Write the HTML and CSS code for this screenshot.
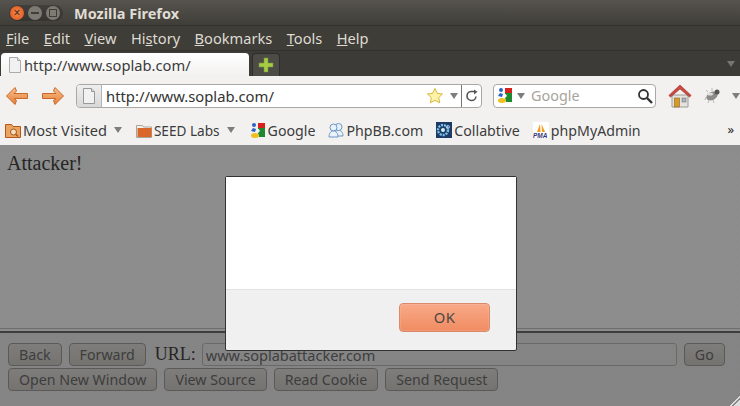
FILE: index.html
```html
<!DOCTYPE html>
<html lang="en">
<head>
  <meta charset="UTF-8">
  <title>Mozilla Firefox</title>
  <link rel="stylesheet" href="styles.css">
</head>
<body>
  <div class="window">
    <div class="titlebar">
      <div class="winbuttons">
        <span class="winbtn close">×</span>
        <span class="winbtn min"><i class="dash"></i></span>
        <span class="winbtn max"><i class="box"></i></span>
      </div>
      <span class="title">Mozilla Firefox</span>
    </div>

    <div class="menubar">
      <span><u>F</u>ile</span>
      <span><u>E</u>dit</span>
      <span><u>V</u>iew</span>
      <span>Hi<u>s</u>tory</span>
      <span><u>B</u>ookmarks</span>
      <span><u>T</u>ools</span>
      <span><u>H</u>elp</span>
    </div>

    <div class="tabbar">
      <div class="tab">
        <svg class="pageicon" width="16" height="16" viewBox="0 0 16 16"><path d="M2.500.5h8l3 3v12h-11z" fill="#f1f1f1" stroke="#aaa"/><path d="M10.500.5v3h3" fill="#ddd" stroke="#aaa"/></svg>
        <span>http://www.soplab.com/</span>
      </div>
      <div class="newtab">
        <svg width="16" height="16" viewBox="0 0 16 16"><path d="M6 1h4v5h5v4h-5v5H6v-5H1V6h5z" fill="#a6cb45" stroke="#76963a" stroke-width=".6"/></svg>
      </div>
      <span class="tabs-arrow"></span>
    </div>

    <div class="navbar">
      <svg class="arrow" width="24" height="20" viewBox="0 0 24 20">
        <defs>
          <linearGradient id="arrowfill" x1="0" y1="0" x2="0" y2="1">
            <stop offset="0" stop-color="#f8c08e"/>
            <stop offset="1" stop-color="#e67f35"/>
          </linearGradient>
        </defs>
        <path d="M10 1.500 1.500 10l8.500 8.500 1.500-4-2.500-2h13.500v-5H9l2.500-2.500z" fill="url(#arrowfill)" stroke="#c9682b" stroke-linejoin="round"/>
      </svg>
      <svg class="arrow next" width="24" height="20" viewBox="0 0 24 20"><path d="M14 1.500l8.500 8.500-8.500 8.500-1.500-4 2.500-2H1.500v-5H15l-2.500-2.500z" fill="url(#arrowfill)" stroke="#c9682b" stroke-linejoin="round"/></svg>

      <div class="urlbar">
        <span class="identity">
          <svg width="16" height="16" viewBox="0 0 16 16"><path d="M2.500.5h8l3 3v12h-11z" fill="#f1f1f1" stroke="#999"/><path d="M10.500.5v3h3" fill="#ddd" stroke="#999"/></svg>
        </span>
        <span class="urltext">http://www.soplab.com/</span>
        <svg class="star" width="18" height="18" viewBox="0 0 18 18"><path d="M9 1.500l2.300 4.800 5.200.7-3.800 3.600 1 5.200L9 13.300l-4.700 2.500 1-5.200L1.500 7l5.200-.7z" fill="#fdf3a8" stroke="#d8b740" stroke-linejoin="round"/></svg>
        <span class="drop"></span>
        <span class="reload">
          <svg width="14" height="14" viewBox="0 0 14 14"><path d="M11 7.500A4.500 4.500 0 1 1 7 2.500h3" fill="none" stroke="#555" stroke-width="1.600"/><path d="M9 .5l3.500 2.300L9 5.500z" fill="#555"/></svg>
        </span>
      </div>

      <div class="searchbar">
        <svg class="gicon" width="16" height="17" viewBox="0 0 16 17"><rect x="8" y="1" width="7" height="6" fill="#d8201c"/><path d="M8 6h7v9H9l-1-4 2-2z" fill="#1d8a30"/><circle cx="4" cy="3" r="2" fill="#2a62c6"/><path d="M1 9l2-3 3 1-1 3z" fill="#2a62c6"/><ellipse cx="5" cy="13.500" rx="4" ry="2.500" fill="#efc01f"/></svg>
        <span class="drop"></span>
        <span class="searchtext">Google</span>
        <svg width="16" height="16" viewBox="0 0 16 16"><circle cx="6.500" cy="6.500" r="4.500" fill="#fff" stroke="#333" stroke-width="1.800"/><path d="M10 10l5 5" stroke="#333" stroke-width="2.400"/></svg>
      </div>

      <svg class="home" width="24" height="24" viewBox="0 0 24 24"><path d="M4 11h16v12H4z" fill="#e5e3df" stroke="#9a9a96"/><path d="M12 1 .800 11.500l1.700 1.500L12 5l9.500 8 1.700-1.500z" fill="#c64a43" stroke="#9f302c" stroke-width=".6"/><rect x="6.500" y="14" width="5" height="9" fill="#d69a2c" stroke="#8c6518" stroke-width=".6"/><rect x="14" y="14" width="4" height="4" fill="#aab4bd" stroke="#777" stroke-width=".6"/></svg>
      <svg class="bug" width="18" height="16" viewBox="0 0 18 16"><ellipse cx="8" cy="8" rx="6" ry="4" fill="#8a8a8a" transform="rotate(-25 8 8)"/><circle cx="13" cy="4" r="2.500" fill="#555"/><path d="M2 9l-1 3M5 12l-1 3M9 12l1 3M4 4 2 2M8 3l0-3" stroke="#bbb"/><ellipse cx="6" cy="6" rx="3" ry="1.500" fill="#ddd"/></svg>
      <span class="drop"></span>
    </div>

    <div class="bookmarks">
      <span class="mark first">
        <svg width="16" height="16" viewBox="0 0 16 16"><path d="M.500 2.500h6l1.500 2h7.500v11H.500z" fill="#e8a460" stroke="#b5561a"/><circle cx="8.500" cy="10" r="3" fill="#f4dcc0" stroke="#a8551f"/><path d="M10.500 12l2.500 2.500" stroke="#a8551f" stroke-width="1.400"/></svg>
        Most Visited<span class="drop"></span>
      </span>
      <span class="mark seed">
        <svg width="16" height="15" viewBox="0 0 16 15"><path d="M.500 2.500h6l1 1.500h8v10.500H.500z" fill="#f3f1ec" stroke="#a9a49a"/><rect x="1.500" y="5" width="14" height="9" fill="#d9672a"/></svg>
        SEED Labs<span class="drop"></span>
      </span>
      <span class="mark">
        <svg width="16" height="17" viewBox="0 0 16 17"><rect x="8" y="1" width="7" height="6" fill="#d8201c"/><path d="M8 6h7v9H9l-1-4 2-2z" fill="#1d8a30"/><circle cx="4" cy="3" r="2" fill="#2a62c6"/><path d="M1 9l2-3 3 1-1 3z" fill="#2a62c6"/><ellipse cx="5" cy="13.500" rx="4" ry="2.500" fill="#efc01f"/></svg>
        Google
      </span>
      <span class="mark">
        <svg width="16" height="16" viewBox="0 0 16 16"><circle cx="10.500" cy="5" r="3.500" fill="#eaf2fa" stroke="#6d97c4"/><path d="M6 14c0-4 2-5.500 4.500-5.500S15 10 15 14z" fill="#eaf2fa" stroke="#6d97c4"/><circle cx="5.500" cy="5.500" r="3.500" fill="#eaf2fa" stroke="#6d97c4"/><path d="M1 15c0-4 2-6 4.500-6S10 11 10 15z" fill="#eaf2fa" stroke="#6d97c4"/></svg>
        PhpBB.com
      </span>
      <span class="mark">
        <svg width="16" height="16" viewBox="0 0 16 16"><rect width="16" height="16" fill="#1e3a66"/><circle cx="7" cy="8" r="5" fill="none" stroke="#7cc4e8" stroke-width="2.400" stroke-dasharray="2 1"/><circle cx="7" cy="8" r="2" fill="#d4edf8"/><circle cx="12" cy="5" r="1.500" fill="none" stroke="#cde" stroke-width=".8"/></svg>
        Collabtive
      </span>
      <span class="mark">
        <svg width="16" height="16" viewBox="0 0 16 16"><rect width="16" height="16" fill="#fff"/><path d="M4 10 7 2l.5 8zM8.500 2 12 10H9z" fill="#f49a1c"/><text x="0" y="15.500" class="pma">PMA</text></svg>
        phpMyAdmin
      </span>
      <span class="more">»</span>
    </div>

    <div class="content">
      <div class="page">
        <p class="heading">Attacker!</p>
        <div class="controls">
          <div class="row">
            <button>Back</button>
            <button>Forward</button>
            <label>URL:</label>
            <input type="text" value="www.soplabattacker.com">
            <button>Go</button>
          </div>
          <div class="row">
            <button>Open New Window</button>
            <button>View Source</button>
            <button>Read Cookie</button>
            <button>Send Request</button>
          </div>
        </div>
      </div>

      <div class="dimmer"></div>
      <div class="grip"></div>

      <div class="dialog">
        <div class="dialog-body"></div>
        <div class="dialog-foot">
          <button class="ok">OK</button>
        </div>
      </div>
    </div>
  </div>
</body>
</html>
```

FILE: styles.css
```css
* {
  box-sizing: border-box;
}
html, body {
  margin: 0;
  padding: 0;
}
body {
  width: 740px;
  height: 406px;
  overflow: hidden;
  font-family: "Noto Sans", "Open Sans", sans-serif;
}
.window {
  display: flex;
  flex-direction: column;
  height: 406px;
}

.titlebar {
  height: 26px;
  display: flex;
  align-items: center;
  padding-left: 9px;
  background: linear-gradient(#56534e, #3f3e39);
  border-bottom: 1px solid #33322e;
}
.winbuttons {
  display: flex;
  gap: 4px;
  width: 54px;
  padding: 1px;
  margin-right: 11px;
  background: rgba(0, 0, 0, 0.2);
  border-radius: 9px;
}
.winbtn {
  width: 14px;
  height: 14px;
  border-radius: 50%;
  display: flex;
  align-items: center;
  justify-content: center;
  background: #7c7a73;
  color: #3a2a20;
  font-size: 12px;
  line-height: 1;
}
.winbtn.close {
  background: radial-gradient(#f58a4b, #dd4f1c);
}
.dash {
  width: 8px;
  height: 2px;
  background: #3f3e39;
}
.box {
  width: 8px;
  height: 8px;
  border: 1px solid #3f3e39;
}
.title {
  color: #e0ddd4;
  font-size: 14.5px;
  font-weight: bold;
}

.menubar {
  height: 25px;
  display: flex;
  align-items: center;
  gap: 14.5px;
  padding-left: 6px;
  background: #3e3d38;
  border-bottom: 1px solid #33322e;
  color: #dfdbd2;
  font-size: 14.6px;
}

.tabbar {
  height: 25px;
  display: flex;
  align-items: flex-end;
  background: #3c3b37;
  position: relative;
}
.tab {
  width: 248px;
  height: 23px;
  margin-left: 1px;
  padding-left: 6px;
  display: flex;
  align-items: center;
  gap: 1px;
  background: linear-gradient(#fff, #f2f1f0);
  border-radius: 4px 4px 0 0;
  color: #3c3c3c;
  font-size: 14.7px;
}
.newtab {
  width: 28px;
  height: 23px;
  margin-left: 3px;
  display: flex;
  align-items: center;
  justify-content: center;
  background: #4c4b46;
  border: 1px solid #2f2e2a;
  border-bottom: none;
  border-radius: 4px 4px 0 0;
}
.tabs-arrow {
  position: absolute;
  right: 5px;
  top: 10px;
  border-left: 4px solid transparent;
  border-right: 4px solid transparent;
  border-top: 6px solid #77756f;
}

.navbar {
  height: 39px;
  display: flex;
  align-items: center;
  padding-left: 5px;
  background: #f2f1f0;
}
.arrow.next {
  margin-left: 12px;
}
.urlbar {
  width: 406px;
  height: 24px;
  margin-left: 11px;
  display: flex;
  align-items: center;
  background: #fff;
  border: 1px solid #aaa8a4;
  border-radius: 4px;
  font-size: 14.8px;
  color: #333;
}
.identity {
  width: 25px;
  height: 22px;
  display: flex;
  align-items: center;
  justify-content: center;
  background: linear-gradient(#eee, #d8d8d8);
  border-right: 1px solid #b5b5b5;
  border-radius: 3px 0 0 3px;
}
.urltext {
  margin-left: 4px;
  flex: 1;
}
.drop {
  display: inline-block;
  margin: 0 0 0 10px;
  border-left: 4px solid transparent;
  border-right: 4px solid transparent;
  border-top: 6px solid #7d7d7d;
}
.urlbar .drop {
  margin: 0 3px 0 6px;
}
.reload {
  width: 20px;
  height: 22px;
  display: flex;
  align-items: center;
  justify-content: center;
  border-left: 1px solid #77756f;
}
.searchbar {
  width: 163px;
  height: 24px;
  margin-left: 11px;
  padding: 0 2px 0 3px;
  display: flex;
  align-items: center;
  background: #fff;
  border: 1px solid #aaa8a4;
  border-radius: 4px;
}
.searchbar .drop {
  margin: 0 5px 0 4px;
}
.searchtext {
  flex: 1;
  color: #a8a49c;
  font-size: 14.4px;
  margin-left: 1px;
}
.home {
  margin-left: 12px;
}
.bug {
  margin-left: 12px;
}

.bookmarks {
  height: 30px;
  display: flex;
  align-items: center;
  padding-left: 5px;
  background: #f2f1f0;
  color: #3c3c3c;
  font-size: 14.2px;
  position: relative;
}
.mark {
  display: flex;
  align-items: center;
  gap: 2px;
  margin-right: 13px;
}
.mark .drop {
  margin: 0 0 0 5px;
}
.first {
  font-size: 14.6px;
  margin-right: 14px;
}
.seed {
  font-size: 13.6px;
  margin-right: 15px;
}
.pma {
  font-family: "Liberation Sans", sans-serif;
  font-size: 6.500px;
  font-weight: bold;
  font-style: italic;
  fill: #35357a;
}
.more {
  position: absolute;
  right: 6px;
  top: 5px;
  font-size: 13px;
  color: #222;
}

.content {
  flex: 1;
  position: relative;
  background: #fff;
}
.page {
  height: 100%;
  display: flex;
  flex-direction: column;
  justify-content: space-between;
}
.heading {
  margin: 7px 0 0 7px;
  font-family: "Liberation Serif", serif;
  font-size: 20px;
  color: #444;
}
.controls {
  height: 75px;
  border-top: 2px solid #6e6e6e;
  box-shadow: 0 -2px 0 #fff, 0 -3px 0 #c8c8c8;
  padding: 9px 0 0 8px;
  background: #f2f1f0;
}
.row {
  display: flex;
  align-items: center;
  gap: 7px;
  height: 25px;
}
.row label {
  margin-left: 2px;
  font-family: "Liberation Serif", serif;
  font-size: 18px;
  color: #444;
}
.row input {
  width: 475px;
  height: 23px;
  padding: 0 3px;
  margin-left: -1px;
  border: 1px solid #c0bebb;
  border-radius: 3px;
  background: #f2f1f0;
  color: #707070;
  font-family: inherit;
  font-size: 14.5px;
}
.row button {
  height: 23px;
  padding: 0 10px;
  border: 1px solid #a5a3a0;
  border-radius: 4px;
  background: linear-gradient(#e6e3df, #d4d1cc);
  color: #707070;
  font-family: inherit;
  font-size: 14.2px;
}
.row button:last-child {
  margin-right: 1px;
}
.dimmer {
  position: absolute;
  inset: 0;
  background: repeating-conic-gradient(rgba(0, 0, 0, 0.46) 0 25%, rgba(0, 0, 0, 0.44) 0 50%) 0 0 / 2px 2px;
}
.grip {
  position: absolute;
  right: 0;
  bottom: 0;
  width: 11px;
  height: 11px;
  background: linear-gradient(135deg, transparent 50%, #ddd 50%, #ddd 60%, #888 60%, #888 70%, #ddd 70%);
}

.dialog {
  position: absolute;
  left: 225px;
  top: 31px;
  width: 292px;
  height: 175px;
  display: flex;
  flex-direction: column;
  background: #f0f0f0;
  border: 1px solid #333;
  border-radius: 2px;
}
.dialog-body {
  height: 113px;
  background: #fff;
  border-bottom: 1px solid #e2e2e2;
}
.dialog-foot {
  flex: 1;
  display: flex;
  justify-content: flex-end;
  align-items: center;
  padding: 0 26px 6px 0;
}
.ok {
  width: 91px;
  height: 29px;
  border: 1px solid #d98a6a;
  border-radius: 4px;
  background: linear-gradient(#f9a988, #f08c62);
  box-shadow: inset 0 0 1px #fff;
  color: #4c4742;
  font-family: inherit;
  font-size: 14.8px;
  letter-spacing: 0.5px;
}
```
